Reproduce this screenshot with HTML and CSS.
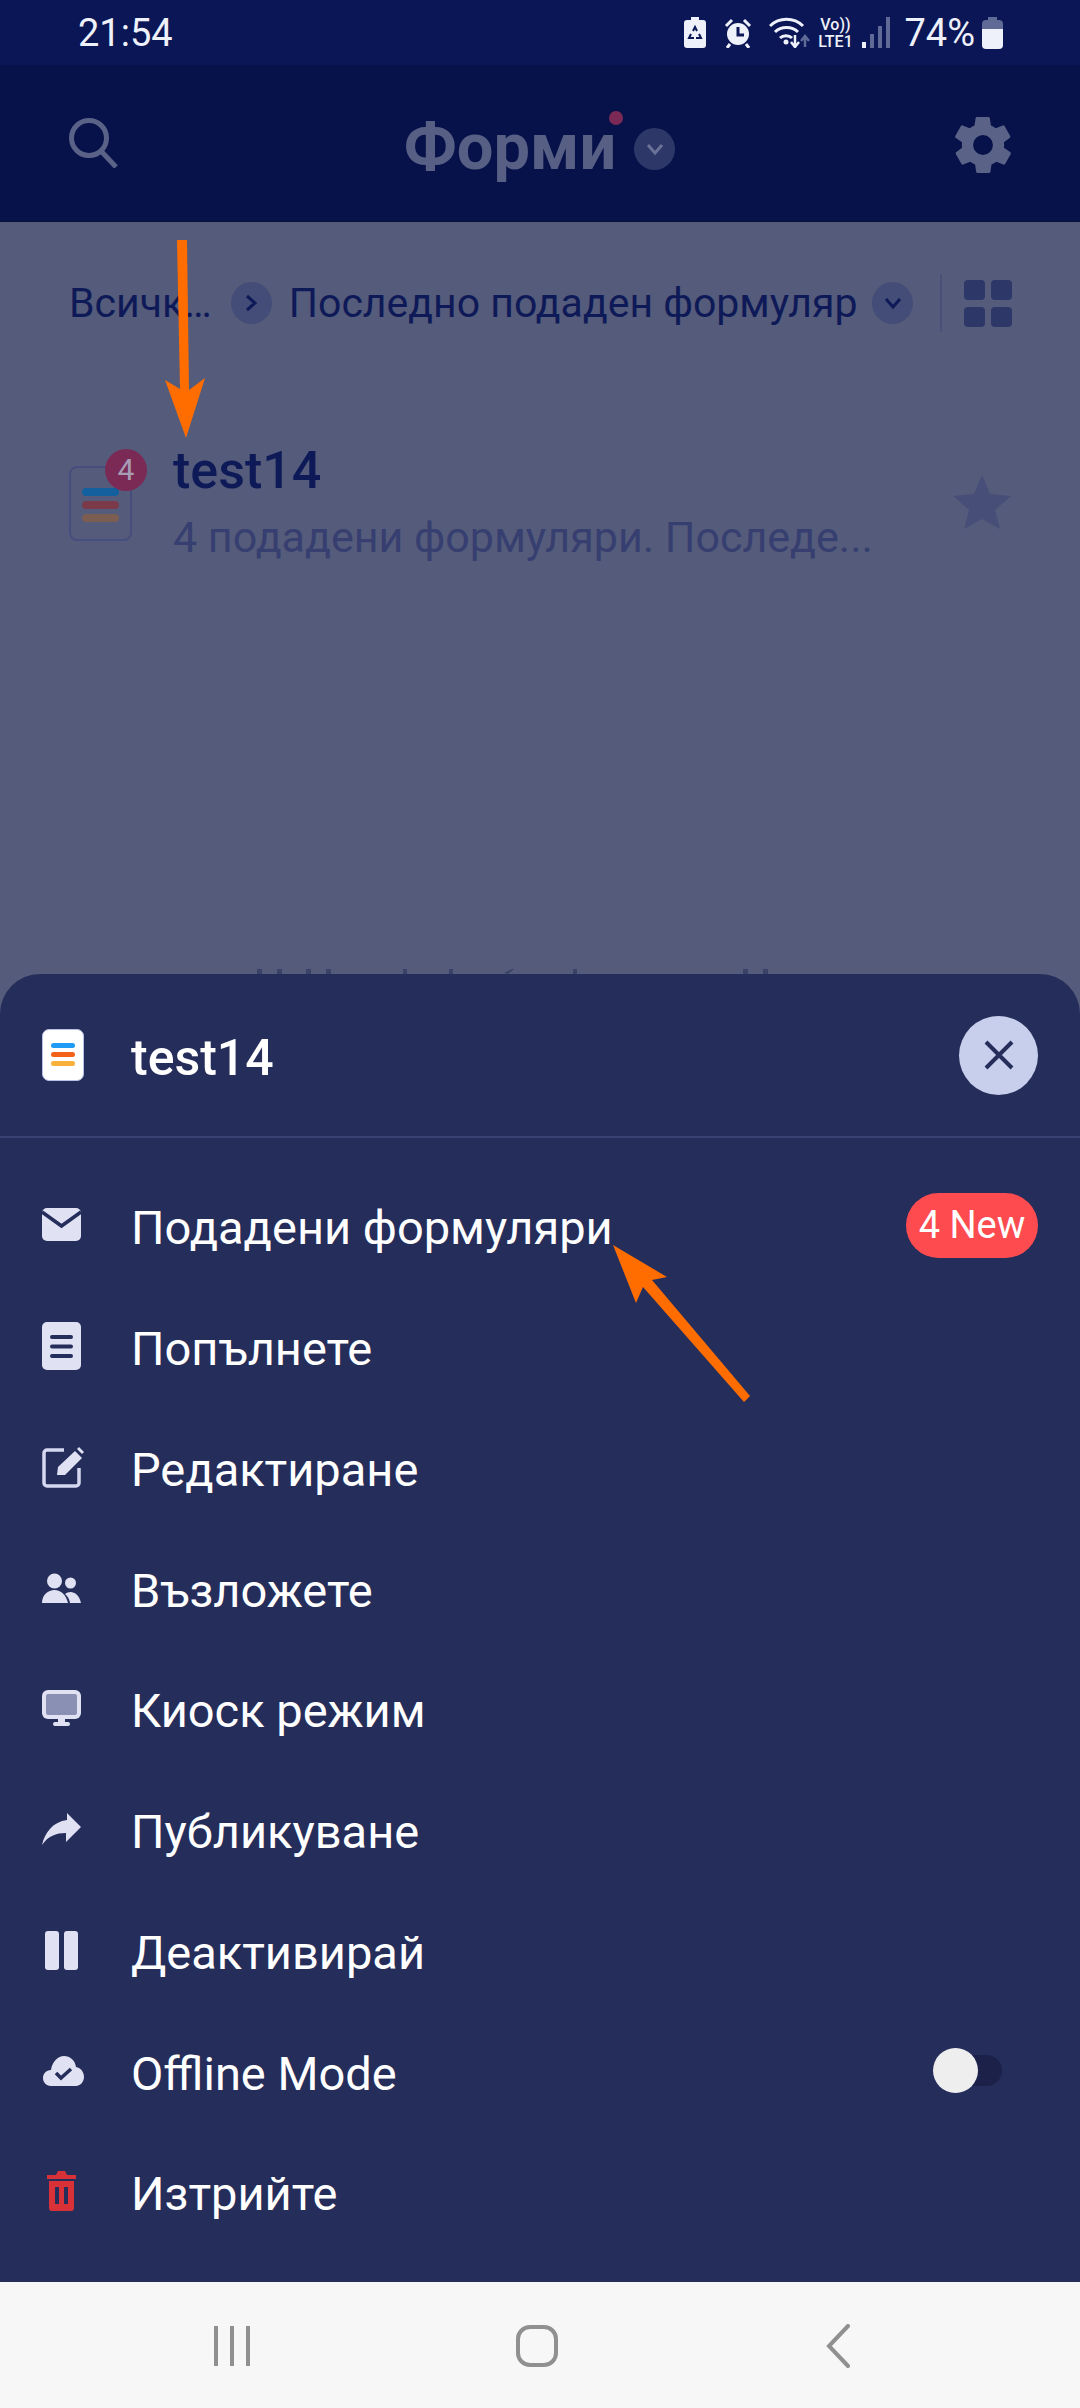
FILE: index.html
```html
<!DOCTYPE html>
<html lang="bg">
<head>
  <title>Форми</title>
  <link rel="stylesheet" href="styles.css">
</head>
<body>
  <div class="status-bar">
    <span class="status-time">21:54</span>
    <div class="status-icons">
      <svg class="st-batt" width="22" height="31" viewBox="0 0 22 31">
        <path d="M7 0h8v3h4a3 3 0 0 1 3 3v22a3 3 0 0 1-3 3H3a3 3 0 0 1-3-3V6a3 3 0 0 1 3-3h4z" fill="#eef0fa"/>
        <path d="M9 14l2-4 2 4M15 17l2 4h-5M10 21H5l2-4" stroke="#0a1655" stroke-width="2" fill="none"/>
      </svg>
      <svg class="st-alarm" width="30" height="30" viewBox="0 0 30 30">
        <circle cx="15" cy="16" r="11" fill="#eef0fa"/>
        <path d="M3 8l6-6M27 8l-6-6M7 26l-3 4M23 26l3 4" stroke="#eef0fa" stroke-width="3"/>
        <path d="M15 9v8h6" stroke="#0a1655" stroke-width="3" fill="none"/>
      </svg>
      <svg class="st-wifi" width="42" height="31" viewBox="0 0 42 31">
        <path d="M1 9c9-9 24-9 33 0M6 15c6-6 17-6 23 0M11 21c3-3 9-3 12 0" stroke="#eef0fa" stroke-width="3" fill="none"/>
        <circle cx="17" cy="25" r="2.5" fill="#eef0fa"/>
        <path d="M26 18v11M22 25l4 5 4-5" stroke="#eef0fa" stroke-width="2.5" fill="none"/>
        <path d="M36 30V20M32 24l4-5 4 5" stroke="#5f6a97" stroke-width="2.5" fill="none"/>
      </svg>
      <div class="st-lte"><span>Vo))</span><span>LTE1</span></div>
      <svg class="st-signal" width="29" height="32" viewBox="0 0 29 32">
        <rect x="0" y="25" width="4" height="6" fill="#eef0fa"/>
        <rect x="8" y="17" width="4" height="14" fill="#5f6a97"/>
        <rect x="16" y="9" width="4" height="22" fill="#5f6a97"/>
        <rect x="24" y="0" width="4" height="31" fill="#5f6a97"/>
      </svg>
      <span class="status-pct">74%</span>
      <svg class="st-level" width="21" height="32" viewBox="0 0 21 32">
        <path d="M6 0h9v3h2a4 4 0 0 1 4 4v6H0V7a4 4 0 0 1 4-4h2z" fill="#5f6a97"/>
        <path d="M0 12h21v16a4 4 0 0 1-4 4H4a4 4 0 0 1-4-4z" fill="#eef0fa"/>
      </svg>
    </div>
  </div>

  <header class="app-bar">
    <svg width="50" height="50" viewBox="0 0 50 50">
      <circle cx="20" cy="20" r="17.5" stroke="#5a6287" stroke-width="5" fill="none"/>
      <path d="M32 33l15 16" stroke="#5a6287" stroke-width="5"/>
    </svg>
    <div class="app-title">
      <span class="title-dot"></span>
      <span>Форми</span>
      <span class="round-btn title-btn">
        <svg width="20" height="14" viewBox="0 0 20 14"><path d="M3 3l7 8 7-8" stroke="#6a7297" stroke-width="3" fill="none"/></svg>
      </span>
    </div>
    <svg class="gear" width="68" height="68" viewBox="0 0 24 24">
      <path fill="#5a6287" d="M19.4 13a7.500 7.500 0 0 0 0-2l2.100-1.600a.5.5 0 0 0 .1-.6l-2-3.500a.5.5 0 0 0-.6-.2l-2.500 1a7.300 7.300 0 0 0-1.700-1l-.4-2.600a.5.5 0 0 0-.5-.4h-4a.5.5 0 0 0-.5.4l-.4 2.600a7.300 7.300 0 0 0-1.700 1l-2.500-1a.5.5 0 0 0-.6.2l-2 3.500a.5.5 0 0 0 .1.6L4.600 11a7.500 7.500 0 0 0 0 2l-2.100 1.600a.5.5 0 0 0-.1.6l2 3.500a.5.5 0 0 0 .6.2l2.500-1c.5.400 1.100.7 1.700 1l.4 2.600a.5.5 0 0 0 .5.4h4a.5.5 0 0 0 .5-.4l.4-2.600c.6-.3 1.200-.6 1.700-1l2.500 1a.5.5 0 0 0 .6-.2l2-3.500a.5.5 0 0 0-.1-.6zM12 15.500a3.500 3.500 0 1 1 0-7 3.500 3.500 0 0 1 0 7z"/>
    </svg>
  </header>

  <main class="forms-page">
    <div class="filter-row">
      <span class="crumb">Всичк…</span>
      <span class="round-btn filter-btn">
        <svg width="14" height="20" viewBox="0 0 14 20"><path d="M3 3l8 7-8 7" stroke="#0e1a58" stroke-width="3" fill="none"/></svg>
      </span>
      <span class="sort-label">Последно подаден формуляр</span>
      <span class="round-btn filter-btn">
        <svg width="20" height="14" viewBox="0 0 20 14"><path d="M3 3l7 8 7-8" stroke="#0e1a58" stroke-width="3" fill="none"/></svg>
      </span>
      <span class="filter-sep"></span>
      <div class="grid-icon"><i></i><i></i><i></i><i></i></div>
    </div>

    <div class="form-item">
      <div class="form-thumb">
        <i class="bar-a"></i><i class="bar-b"></i><i class="bar-c"></i>
        <span class="thumb-badge">4</span>
      </div>
      <div class="form-info">
        <div class="form-name">test14</div>
        <div class="form-meta">4 подадени формуляри. Последе...</div>
      </div>
      <svg class="form-star" width="58" height="54" viewBox="0 0 58 54">
        <path fill="#474f78" d="M29 0l8 19 21 2-16 14 5 19-18-10-18 10 5-19L0 21l21-2z"/>
      </svg>
    </div>

    <!-- tops of a line of text that the sheet hides -->
    <svg class="peek" width="1080" height="6" viewBox="0 0 1080 6">
      <path fill="#3a4268" d="M257 1h5v5h-5zM277 1h5v5h-5zM306 1h5v5h-5zM326 1h5v5h-5zM403 1h4v5h-4zM449 1h4v5h-4zM504 5l8-4h2l-6 5zM573 1h4v5h-4zM743 1h5v5h-5zM763 1h5v5h-5z"/>
    </svg>
  </main>

  <section class="sheet">
    <div class="sheet-head">
      <div class="sheet-thumb"><i class="bar-a"></i><i class="bar-b"></i><i class="bar-c"></i></div>
      <span class="sheet-title">test14</span>
      <span class="sheet-close">
        <svg width="32" height="32" viewBox="0 0 32 32"><path d="M3 3l26 26M29 3L3 29" stroke="#252d5b" stroke-width="4"/></svg>
      </span>
    </div>
    <ul class="menu">
      <li class="menu-row">
        <svg class="menu-icon" viewBox="0 0 44 48">
          <rect x="0" y="7" width="39" height="33" rx="5" fill="#e0e2f4"/>
          <path d="M0 11l19.500 14L39 11" stroke="#252d5b" stroke-width="3.500" fill="none"/>
        </svg>
        <span class="menu-label">Подадени формуляри</span>
        <span class="new-badge">4 New</span>
      </li>
      <li class="menu-row">
        <svg class="menu-icon" viewBox="0 0 44 48">
          <rect x="0" y="0" width="39" height="48" rx="5" fill="#e0e2f4"/>
          <path d="M10 15h19M10 24.500h19M10 34h19" stroke="#252d5b" stroke-width="4" stroke-linecap="round"/>
        </svg>
        <span class="menu-label">Попълнете</span>
      </li>
      <li class="menu-row">
        <svg class="menu-icon" viewBox="0 0 44 48">
          <path d="M22 7H5a3 3 0 0 0-3 3v30a3 3 0 0 0 3 3h29a3 3 0 0 0 3-3V25" stroke="#d5d8f0" stroke-width="3.500" fill="none"/>
          <path d="M15 32l1-8 17-16 7 7-17 17z" fill="#e0e2f4"/>
          <path d="M35 6l2-2 5 5-2 2z" fill="#e0e2f4"/>
        </svg>
        <span class="menu-label">Редактиране</span>
      </li>
      <li class="menu-row">
        <svg class="menu-icon" viewBox="0 0 44 48">
          <circle cx="12.500" cy="17" r="7.500" fill="#e0e2f4"/>
          <circle cx="28.500" cy="19" r="5.500" fill="#e0e2f4"/>
          <path d="M0 39c0-8 6-13 12.500-13S24 31 26 39z" fill="#e0e2f4"/>
          <path d="M28 39c-.5-4-2.500-7-5-9 5-4.500 14-2 16 9z" fill="#e0e2f4"/>
        </svg>
        <span class="menu-label">Възложете</span>
      </li>
      <li class="menu-row">
        <svg class="menu-icon" viewBox="0 0 44 48">
          <rect x="0" y="6" width="39" height="29" rx="6" fill="#e0e2f4"/>
          <rect x="4" y="10" width="31" height="21" rx="2" fill="#8a90b4"/>
          <rect x="16" y="35" width="7" height="5" fill="#e0e2f4"/>
          <rect x="11" y="38" width="17" height="4" rx="2" fill="#e0e2f4"/>
        </svg>
        <span class="menu-label">Киоск режим</span>
      </li>
      <li class="menu-row">
        <svg class="menu-icon" viewBox="0 0 44 48">
          <path d="M25 8l14 14-15 15v-9c-10 0-18 3-24 12 3-13 11-23 25-25z" fill="#e0e2f4"/>
        </svg>
        <span class="menu-label">Публикуване</span>
      </li>
      <li class="menu-row">
        <svg class="menu-icon" viewBox="0 0 44 48">
          <rect x="3" y="5" width="14" height="39" rx="3" fill="#e0e2f4"/>
          <rect x="22" y="5" width="14" height="39" rx="3" fill="#e0e2f4"/>
        </svg>
        <span class="menu-label">Деактивирай</span>
      </li>
      <li class="menu-row">
        <svg class="menu-icon" viewBox="0 0 44 48">
          <path d="M9 39c-5 0-8-4-8-8s3-8 8-8c1-8 7-14 13-14s11 4 12 11c5 1 8 5 8 10s-4 9-8 9z" fill="#e0e2f4"/>
          <path d="M14 26l5 5 10-9" stroke="#252d5b" stroke-width="3.500" fill="none"/>
        </svg>
        <span class="menu-label">Offline Mode</span>
        <span class="toggle"><span class="toggle-knob"></span></span>
      </li>
      <li class="menu-row">
        <svg class="menu-icon" viewBox="0 0 44 48">
          <path d="M14 8l2-4h7l2 4h9v4H5V8z" fill="#d83138"/>
          <path d="M7 14h25v27a3 3 0 0 1-3 3H10a3 3 0 0 1-3-3z" fill="#d83138"/>
          <path d="M15 20v17M24 20v17" stroke="#252d5b" stroke-width="4"/>
        </svg>
        <span class="menu-label">Изтрийте</span>
      </li>
    </ul>
  </section>

  <nav class="nav-bar">
    <svg width="36" height="42" viewBox="0 0 36 42">
      <path d="M2 1v40M18 1v40M34 1v40" stroke="#909090" stroke-width="4"/>
    </svg>
    <svg class="nav-home" width="42" height="42" viewBox="0 0 42 42">
      <rect x="2" y="2" width="38" height="38" rx="12" stroke="#909090" stroke-width="4" fill="none"/>
    </svg>
    <svg width="24" height="44" viewBox="0 0 24 44">
      <path d="M22 2L3 22l19 20" stroke="#909090" stroke-width="4" fill="none" stroke-linecap="round"/>
    </svg>
  </nav>

  <!-- orange annotations drawn over the screenshot -->
  <svg class="arrows" width="1080" height="2408" viewBox="0 0 1080 2408">
    <path fill="#ff6d00" d="M177 240h10l2 150 16-12-19 60-21-58 15 9z"/>
    <path fill="#ff6d00" d="M613 1245l54 32-15 3 98 116-6 6-101-115-7 16z"/>
  </svg>
</body>
</html>
```
FILE: styles.css
```css
html, body {
  margin: 0;
  padding: 0;
}
body {
  position: relative;
  width: 1080px;
  height: 2408px;
  display: flex;
  flex-direction: column;
  overflow: hidden;
  font-family: Roboto, "Noto Sans", sans-serif;
  background: #555b7a;
}
ul {
  list-style: none;
  margin: 0;
  padding: 0;
}

/* status bar */
.status-bar {
  height: 65px;
  padding: 0 77px 0 78px;
  display: flex;
  align-items: center;
  justify-content: space-between;
  background: #0a1655;
  color: #eef0fa;
}
.status-time {
  font-size: 38px;
}
.status-icons {
  display: flex;
  align-items: center;
}
.st-alarm { margin-left: 17px; }
.st-wifi { margin-left: 16px; }
.st-lte {
  width: 40px;
  margin-left: 4px;
  display: flex;
  flex-direction: column;
  align-items: center;
  font-size: 16px;
  line-height: 17px;
  font-weight: 500;
}
.st-signal { margin-left: 7px; }
.status-pct {
  margin-left: 13px;
  font-size: 38px;
}
.st-level { margin-left: 7px; }

/* app bar */
.app-bar {
  height: 157px;
  padding: 0 63px 0 69px;
  display: flex;
  align-items: center;
  justify-content: space-between;
  background: #08124a;
  border-bottom: 1px solid #0a1030;
  box-sizing: border-box;
}
.app-title {
  position: relative;
  display: flex;
  align-items: center;
  gap: 18px;
  margin: 8px 0 0 11px;
  font-size: 65px;
  font-weight: 700;
  color: #575f84;
}
.title-dot {
  position: absolute;
  top: 2px;
  right: 52px;
  width: 14px;
  height: 14px;
  border-radius: 50%;
  background: #7a2a55;
}
.round-btn {
  display: flex;
  align-items: center;
  justify-content: center;
  width: 41px;
  height: 42px;
  border-radius: 50%;
}
.title-btn {
  margin-top: 3px;
  background: #2d3768;
}
.gear {
  margin-top: 3px;
}

/* page behind the sheet */
.forms-page {
  flex: 1;
  display: flex;
  flex-direction: column;
  min-height: 0;
  overflow: hidden;
}
.filter-row {
  display: flex;
  align-items: center;
  height: 58px;
  margin-top: 52px;
  padding: 0 68px 0 69px;
  color: #0e1a58;
  font-size: 41px;
}
.filter-btn {
  background: #444c78;
}
.crumb {
  width: 162px;
}
.sort-label {
  width: 584px;
  margin-left: 17px;
}
.filter-sep {
  width: 2px;
  height: 58px;
  margin-left: 27px;
  background: #4a5178;
}
.grid-icon {
  display: grid;
  grid-template-columns: 21px 21px;
  gap: 7px 6px;
  margin-left: 22px;
}
.grid-icon i {
  height: 20px;
  border-radius: 4px;
  background: #2d3768;
}
.form-item {
  display: flex;
  align-items: flex-start;
  height: 130px;
  margin-top: 113px;
  padding: 0 69px;
}
.form-thumb {
  position: relative;
  width: 63px;
  height: 75px;
  margin-top: 21px;
  padding: 20px 11px 0;
  box-sizing: border-box;
  border: 2px solid #454e7c;
  border-radius: 8px;
  flex-shrink: 0;
}
.form-thumb i {
  display: block;
  height: 8px;
  border-radius: 4px;
  margin-bottom: 5px;
}
.form-thumb .bar-a { background: #145f9e; }
.form-thumb .bar-b { background: #7a3a4a; }
.form-thumb .bar-c { background: #7b5d52; }
.thumb-badge {
  position: absolute;
  top: -19px;
  right: -17px;
  width: 42px;
  height: 42px;
  border-radius: 50%;
  background: #7a2a55;
  color: #a89bb5;
  font-size: 30px;
  line-height: 42px;
  text-align: center;
}
.form-info {
  flex: 1;
  margin: -4px 0 0 41px;
}
.form-name {
  font-size: 52px;
  font-weight: 500;
  line-height: 60px;
  color: #0e1a58;
}
.form-meta {
  margin-top: 13px;
  font-size: 43px;
  line-height: 46px;
  color: #363f70;
}
.form-star {
  margin: 30px 0 0;
}
.peek {
  margin-top: auto;
  flex-shrink: 0;
}

/* bottom sheet */
.sheet {
  height: 1308px;
  flex-shrink: 0;
  background: #252d5b;
  border-radius: 40px 40px 0 0;
  position: relative;
}
.sheet-head {
  height: 164px;
  padding: 0 42px;
  display: flex;
  align-items: center;
  border-bottom: 2px solid #3a4273;
  box-sizing: border-box;
}
.sheet-thumb {
  width: 42px;
  height: 52px;
  padding: 13px 8px 0;
  box-sizing: border-box;
  background: #fff;
  border: 1px solid #b8c0e8;
  border-radius: 7px;
}
.sheet-thumb i {
  display: block;
  height: 5px;
  margin-bottom: 4px;
  border-radius: 3px;
}
.sheet-thumb .bar-a { background: #1e9bf5; }
.sheet-thumb .bar-b { background: #f4611a; }
.sheet-thumb .bar-c { background: #f9b13a; }
.sheet-title {
  flex: 1;
  margin-left: 47px;
  padding-top: 6px;
  font-size: 50px;
  font-weight: 500;
  color: #fff;
}
.sheet-close {
  display: flex;
  align-items: center;
  justify-content: center;
  width: 79px;
  height: 79px;
  border-radius: 50%;
  background: #c8cfec;
}
.menu {
  padding: 27px 42px 0;
}
.menu-row {
  height: 120.750px;
  display: flex;
  align-items: center;
}
.menu-icon {
  width: 44px;
  height: 48px;
  overflow: visible;
  flex-shrink: 0;
}
.menu-label {
  flex: 1;
  margin-left: 45px;
  padding-top: 5px;
  font-size: 47px;
  color: #fff;
}
.new-badge {
  width: 132px;
  height: 65px;
  border-radius: 33px;
  background: #fd4b4f;
  color: #fff;
  font-size: 38px;
  line-height: 65px;
  text-align: center;
}
.toggle {
  position: relative;
  width: 69px;
  height: 31px;
  margin-right: 36px;
  border-radius: 16px;
  background: #1b2149;
}
.toggle-knob {
  position: absolute;
  top: -7px;
  left: 0;
  width: 45px;
  height: 45px;
  border-radius: 50%;
  background: #eeeeee;
}

/* system nav */
.nav-bar {
  height: 126px;
  flex-shrink: 0;
  padding: 2px 230px 0 214px;
  display: flex;
  align-items: center;
  justify-content: space-between;
  background: #f7f7f7;
  box-sizing: border-box;
}
.nav-home {
  margin-right: 3px;
}

.arrows {
  position: absolute;
  top: 0;
  left: 0;
}
```
